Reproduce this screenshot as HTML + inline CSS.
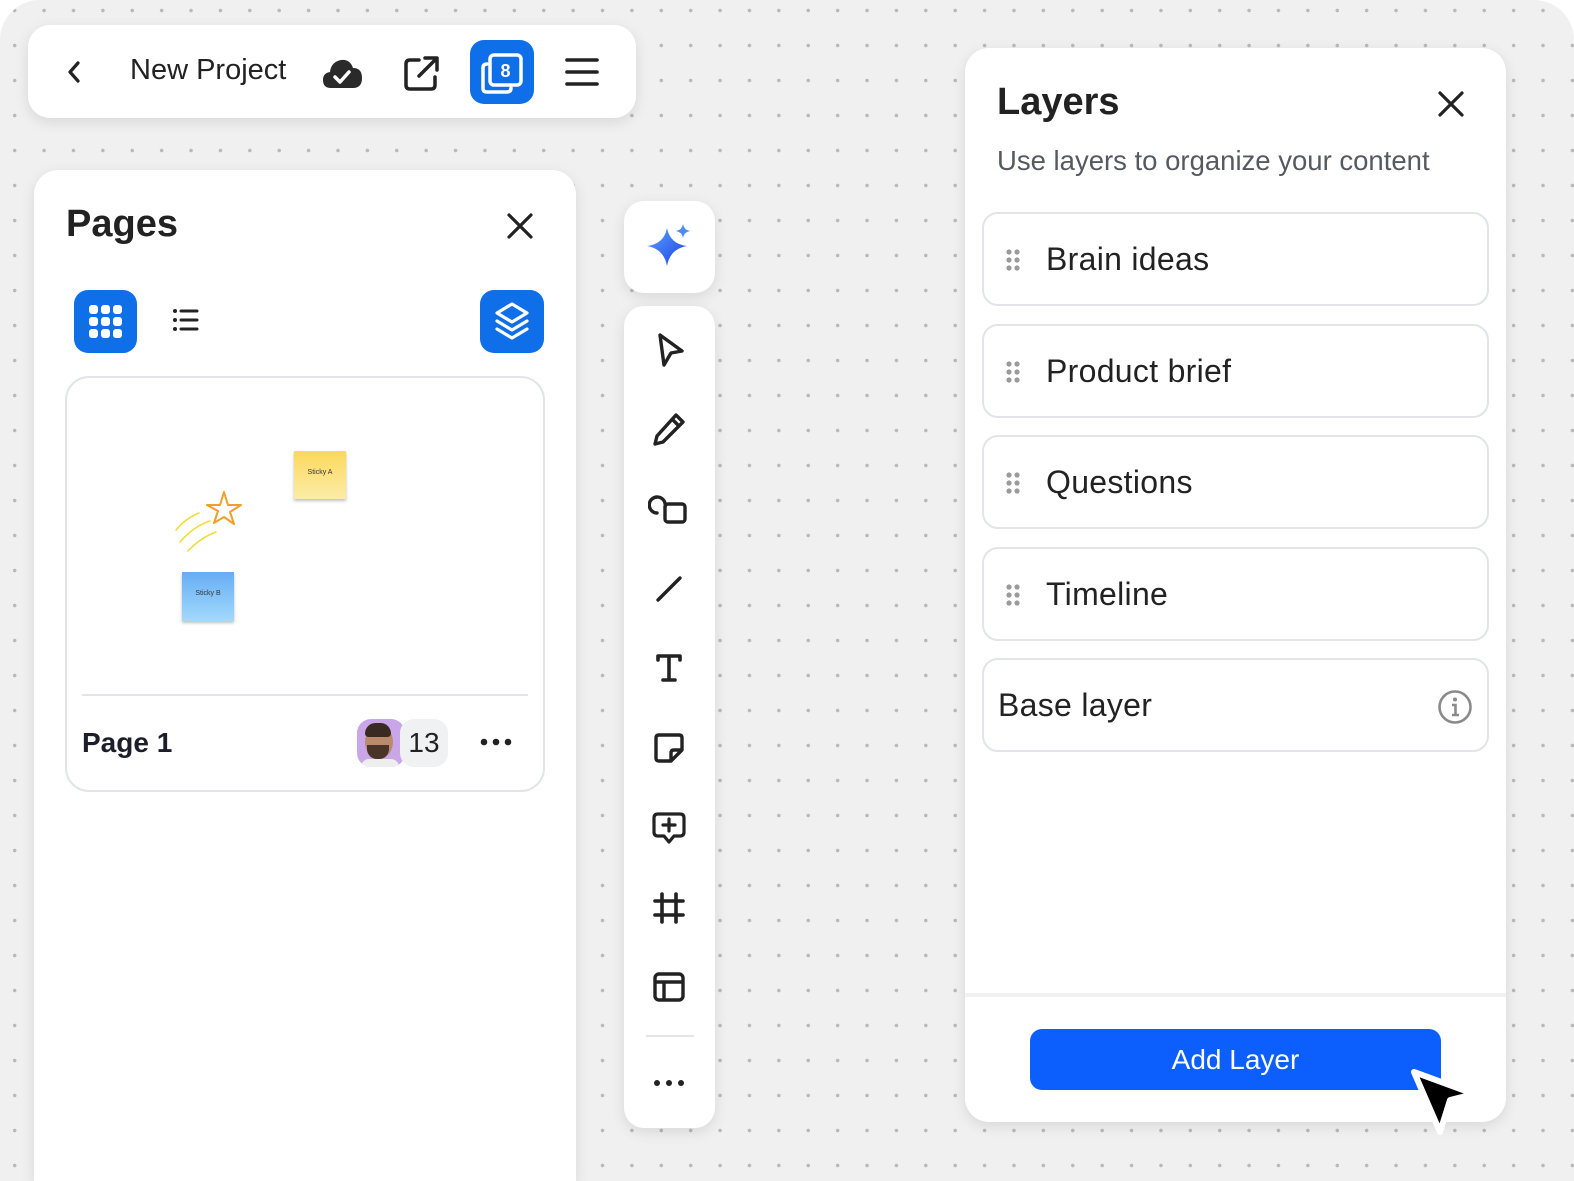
<!DOCTYPE html>
<html style="overflow:hidden;width:1574px;height:1181px"><head><meta charset="utf-8"><style>
*{box-sizing:border-box;margin:0;padding:0}
body{width:1574px;height:1181px;overflow:hidden;position:relative;background:#fff;font-family:"Liberation Sans",sans-serif;color:#222}
.bg{position:absolute;left:0;top:0;width:1574px;height:1181px;border-radius:40px 40px 0 0;background-color:#f0f0f0;background-image:radial-gradient(circle,#b9b9b9 1.6px,transparent 2px);background-size:29.4px 35px;background-position:0px -7px}
.card{position:absolute;background:#fff;box-shadow:0 4px 14px rgba(0,0,0,.10)}
.ic{position:absolute}
.item{position:absolute;left:982px;width:507px;height:94px;border:2px solid #e2e4e8;border-radius:16px;background:#fff}
.item .t{position:absolute;left:62px;top:27px;font-size:32px;color:#222;letter-spacing:.3px}
.grip{position:absolute;left:22px;top:35px}
</style></head><body>
<div class="bg"></div>

<div class="card" style="left:28px;top:25px;width:608px;height:93px;border-radius:22px"></div>
<svg class="ic" style="left:62px;top:58px" width="24" height="28" viewBox="0 0 24 28"><path d="M16 5 L8 14 L16 23" fill="none" stroke="#222" stroke-width="3.2" stroke-linecap="round" stroke-linejoin="round"/></svg>
<div style="position:absolute;left:130px;top:54px;font-size:29px;color:#222">New Project</div>
<svg class="ic" style="left:322px;top:56px" width="42" height="34" viewBox="0 0 42 34"><path d="M9 32 Q1 32 1 24 Q1 17 8 16 Q9 6 19 4 Q28 3 31 12 Q40 12 40 22 Q40 32 31 32 Z" fill="#2a2a2a"/><path d="M13 21 L18 26 L27 16" fill="none" stroke="#fff" stroke-width="3.5" stroke-linecap="round" stroke-linejoin="round"/></svg>
<svg class="ic" style="left:402px;top:53px" width="40" height="40" viewBox="0 0 40 40"><path d="M17 7 H8 Q4 7 4 11 V32 Q4 36 8 36 H29 Q33 36 33 32 V24" fill="none" stroke="#222" stroke-width="3.5" stroke-linecap="round"/><path d="M17 23 L34 6 M23 5 H35 V17" fill="none" stroke="#222" stroke-width="3.5" stroke-linecap="round" stroke-linejoin="round"/></svg>
<div style="position:absolute;left:470px;top:40px;width:64px;height:64px;background:#0f6fe8;border-radius:14px"></div>
<svg class="ic" style="left:478px;top:50px" width="50" height="46" viewBox="0 0 50 46"><path d="M9 14 Q5 14 5 18 V38 Q5 42 9 42 H29 Q33 42 33 38" fill="none" stroke="#fff" stroke-width="3.5" stroke-linecap="round"/><rect x="12" y="5" width="31" height="30" rx="4" fill="none" stroke="#fff" stroke-width="3.5"/><text x="27.5" y="27" text-anchor="middle" font-family="Liberation Sans" font-weight="bold" font-size="18" fill="#fff">8</text></svg>
<svg class="ic" style="left:564px;top:56px" width="36" height="32" viewBox="0 0 36 32"><path d="M3 4 H33 M3 16 H33 M3 28 H33" stroke="#222" stroke-width="3.6" stroke-linecap="round"/></svg>

<div class="card" style="left:34px;top:170px;width:542px;height:1011px;border-radius:24px 24px 0 0"></div>
<div style="position:absolute;left:66px;top:203px;font-size:38px;font-weight:bold;color:#222">Pages</div>
<svg class="ic" style="left:505px;top:211px" width="30" height="30" viewBox="0 0 30 30"><path d="M4 4 L26 26 M26 4 L4 26" stroke="#222" stroke-width="3.2" stroke-linecap="round"/></svg>
<div style="position:absolute;left:74px;top:290px;width:63px;height:63px;background:#0f6fe8;border-radius:14px"></div>
<svg class="ic" style="left:88px;top:304px" width="36" height="36" viewBox="0 0 36 36"><g fill="#fff"><rect x="1" y="1" width="9" height="9" rx="3"/><rect x="13" y="1" width="9" height="9" rx="3"/><rect x="25" y="1" width="9" height="9" rx="3"/><rect x="1" y="13" width="9" height="9" rx="3"/><rect x="13" y="13" width="9" height="9" rx="3"/><rect x="25" y="13" width="9" height="9" rx="3"/><rect x="1" y="25" width="9" height="9" rx="3"/><rect x="13" y="25" width="9" height="9" rx="3"/><rect x="25" y="25" width="9" height="9" rx="3"/></g></svg>
<svg class="ic" style="left:170px;top:307px" width="30" height="28" viewBox="0 0 30 28"><g fill="#222"><circle cx="5" cy="4" r="2"/><circle cx="5" cy="13" r="2"/><circle cx="5" cy="22" r="2"/></g><path d="M11 4 H27 M11 13 H27 M11 22 H27" stroke="#222" stroke-width="3" stroke-linecap="round"/></svg>
<div style="position:absolute;left:480px;top:290px;width:64px;height:63px;background:#0f6fe8;border-radius:14px"></div>
<svg class="ic" style="left:492px;top:301px" width="40" height="42" viewBox="0 0 40 42"><path d="M20 3 L35 12 L20 21 L5 12 Z" fill="none" stroke="#fff" stroke-width="3.2" stroke-linejoin="round"/><path d="M5 20 L20 29 L35 20 M5 28 L20 37 L35 28" fill="none" stroke="#fff" stroke-width="3.2" stroke-linejoin="round" stroke-linecap="round"/></svg>

<div style="position:absolute;left:65px;top:376px;width:480px;height:416px;border:2px solid #e2e4e8;border-radius:24px;background:#fff"></div>
<div style="position:absolute;left:294px;top:451px;width:52px;height:48px;background:linear-gradient(#fcd85a,#fbeca8);box-shadow:0 2px 3px rgba(0,0,0,.25);font-size:7px;text-align:center;line-height:44px;color:#333">Sticky A</div>
<div style="position:absolute;left:182px;top:572px;width:52px;height:49px;background:linear-gradient(#66adf5,#a2dafc);box-shadow:0 2px 3px rgba(0,0,0,.25);font-size:7px;text-align:center;line-height:44px;color:#333">Sticky B</div>
<svg class="ic" style="left:172px;top:488px" width="80" height="66" viewBox="0 0 80 66"><path d="M52 4 L56 17 L69 17 L58 24 L62 36 L52 29 L42 35 L46 23 L35 17 L48 17 Z" fill="none" stroke="#f0a028" stroke-width="2" stroke-linejoin="round"/><path d="M4 42 Q14 30 27 25 M8 54 Q22 38 38 33 M16 63 Q28 50 44 44" fill="none" stroke="#f2dc3a" stroke-width="1.6" stroke-linecap="round"/></svg>
<div style="position:absolute;left:82px;top:694px;width:446px;height:2px;background:#e2e4e8"></div>
<div style="position:absolute;left:82px;top:727px;font-size:28px;font-weight:bold;color:#1e1e2a">Page 1</div>
<div style="position:absolute;left:357px;top:719px;width:48px;height:48px;border-radius:14px;background:#c9a6e8;overflow:hidden"><div style="position:absolute;left:8px;top:6px;width:28px;height:34px;border-radius:50%;background:#b98a6c"></div><div style="position:absolute;left:8px;top:4px;width:26px;height:14px;border-radius:12px 12px 4px 4px;background:#3a2a22"></div><div style="position:absolute;left:10px;top:26px;width:22px;height:14px;border-radius:0 0 10px 10px;background:#4a3428"></div><div style="position:absolute;left:4px;top:40px;width:38px;height:12px;border-radius:8px 8px 0 0;background:#eee"></div></div>
<div style="position:absolute;left:400px;top:719px;width:48px;height:48px;border-radius:14px;background:#f0f1f3;font-size:28px;line-height:48px;text-align:center;color:#222">13</div>
<svg class="ic" style="left:478px;top:736px" width="36" height="12" viewBox="0 0 36 12"><g fill="#222"><circle cx="6" cy="6" r="3.3"/><circle cx="18" cy="6" r="3.3"/><circle cx="30" cy="6" r="3.3"/></g></svg>

<div class="card" style="left:624px;top:201px;width:91px;height:92px;border-radius:20px"></div>
<svg class="ic" style="left:645px;top:222px" width="50" height="48" viewBox="0 0 50 48"><defs><linearGradient id="g" x1="0" y1="0" x2="1" y2="1"><stop offset="0" stop-color="#5ba3ff"/><stop offset="1" stop-color="#1d3fe0"/></linearGradient></defs><path d="M22 6 Q25 22 42 24 Q25 27 22 44 Q19 27 2 24 Q19 22 22 6 Z" fill="url(#g)"/><path d="M38 2 Q39 8 45 9 Q39 10 38 16 Q37 10 31 9 Q37 8 38 2 Z" fill="#4a8cf5"/></svg>
<div class="card" style="left:624px;top:306px;width:91px;height:822px;border-radius:20px"></div>
<svg class="ic" style="left:652px;top:330px" width="36" height="40" viewBox="0 0 36 40"><path d="M8 5 L30 21 L19 23 L12 35 Z" fill="none" stroke="#222" stroke-width="3.4" stroke-linejoin="round"/></svg>
<svg class="ic" style="left:650px;top:410px" width="38" height="40" viewBox="0 0 38 40"><path d="M26 5 L33 12 L13 32 L5 34 L7 26 Z M22 9 L29 16" fill="none" stroke="#222" stroke-width="3.4" stroke-linejoin="round"/></svg>
<svg class="ic" style="left:648px;top:490px" width="42" height="40" viewBox="0 0 42 40"><path d="M17 17 A8 8 0 1 0 9 23" fill="none" stroke="#222" stroke-width="3.4" stroke-linecap="round"/><rect x="17" y="14" width="20" height="18" rx="3" fill="none" stroke="#222" stroke-width="3.4"/></svg>
<svg class="ic" style="left:650px;top:570px" width="38" height="38" viewBox="0 0 38 38"><path d="M8 30 L30 8" stroke="#222" stroke-width="3.4" stroke-linecap="round"/></svg>
<svg class="ic" style="left:652px;top:650px" width="34" height="36" viewBox="0 0 34 36"><path d="M6 10 V6 H28 V10 M17 6 V30 M11 30 H23" fill="none" stroke="#222" stroke-width="3.6" stroke-linecap="round" stroke-linejoin="round"/></svg>
<svg class="ic" style="left:650px;top:729px" width="38" height="38" viewBox="0 0 38 38"><path d="M6 9 Q6 6 9 6 H29 Q32 6 32 9 V21 L21 32 H9 Q6 32 6 29 Z M32 21 H24 Q21 21 21 24 V32" fill="none" stroke="#222" stroke-width="3.4" stroke-linejoin="round"/></svg>
<svg class="ic" style="left:649px;top:808px" width="40" height="40" viewBox="0 0 40 40"><path d="M9 6 H31 Q35 6 35 10 V24 Q35 28 31 28 H25 L20 34 L15 28 H9 Q5 28 5 24 V10 Q5 6 9 6 Z M20 11 V23 M14 17 H26" fill="none" stroke="#222" stroke-width="3.2" stroke-linejoin="round" stroke-linecap="round"/></svg>
<svg class="ic" style="left:650px;top:889px" width="38" height="38" viewBox="0 0 38 38"><path d="M12 5 V33 M26 5 V33 M5 12 H33 M5 26 H33" stroke="#222" stroke-width="3.6" stroke-linecap="round"/></svg>
<svg class="ic" style="left:650px;top:968px" width="38" height="38" viewBox="0 0 38 38"><rect x="5" y="6" width="28" height="26" rx="4" fill="none" stroke="#222" stroke-width="3.4"/><path d="M5 14 H33 M14 14 V32" stroke="#222" stroke-width="3.4"/></svg>
<div style="position:absolute;left:646px;top:1035px;width:48px;height:2px;background:#e4e4e4"></div>
<svg class="ic" style="left:651px;top:1076px" width="36" height="14" viewBox="0 0 36 14"><g fill="#222"><circle cx="6" cy="7" r="3"/><circle cx="18" cy="7" r="3"/><circle cx="30" cy="7" r="3"/></g></svg>

<div class="card" style="left:965px;top:48px;width:541px;height:1074px;border-radius:24px"></div>
<div style="position:absolute;left:965px;top:993px;width:541px;height:4px;background:#f1f1f1"></div>
<div style="position:absolute;left:997px;top:81px;font-size:38px;font-weight:bold;color:#222">Layers</div>
<svg class="ic" style="left:1436px;top:89px" width="30" height="30" viewBox="0 0 30 30"><path d="M4 4 L26 26 M26 4 L4 26" stroke="#222" stroke-width="3.2" stroke-linecap="round"/></svg>
<div style="position:absolute;left:997px;top:145px;font-size:27.5px;color:#555a60">Use layers to organize your content</div>

<svg width="0" height="0" style="position:absolute"><defs><g id="gr" fill="#9a9a9a"><circle cx="3" cy="3" r="2.6"/><circle cx="11" cy="3" r="2.6"/><circle cx="3" cy="11" r="2.6"/><circle cx="11" cy="11" r="2.6"/><circle cx="3" cy="19" r="2.6"/><circle cx="11" cy="19" r="2.6"/></g></defs></svg>
<div class="item" style="top:212px"><svg class="grip" width="14" height="22"><use href="#gr"/></svg><div class="t">Brain ideas</div></div>
<div class="item" style="top:324px"><svg class="grip" width="14" height="22"><use href="#gr"/></svg><div class="t">Product brief</div></div>
<div class="item" style="top:435px"><svg class="grip" width="14" height="22"><use href="#gr"/></svg><div class="t">Questions</div></div>
<div class="item" style="top:547px"><svg class="grip" width="14" height="22"><use href="#gr"/></svg><div class="t">Timeline</div></div>
<div class="item" style="top:658px"><div class="t" style="left:14px">Base layer</div>
<svg style="position:absolute;left:452px;top:28px" width="38" height="38" viewBox="0 0 38 38"><circle cx="19" cy="19" r="15.5" fill="none" stroke="#8a8a8a" stroke-width="2.6"/><circle cx="19" cy="11.5" r="2" fill="#8a8a8a"/><path d="M16 17 H19.5 V27 M16 27 H23" fill="none" stroke="#8a8a8a" stroke-width="2.6"/></svg></div>

<div style="position:absolute;left:1030px;top:1029px;width:411px;height:61px;background:#0d5ffd;border-radius:12px;color:#fff;font-size:28px;text-align:center;line-height:61px">Add Layer</div>
<svg class="ic" style="left:1400px;top:1060px" width="85" height="85" viewBox="0 0 85 85"><path d="M14 12 L74 34 L50 40 L40 72 Z" fill="#000" stroke="#fff" stroke-width="6" stroke-linejoin="round"/></svg>
</body></html>
